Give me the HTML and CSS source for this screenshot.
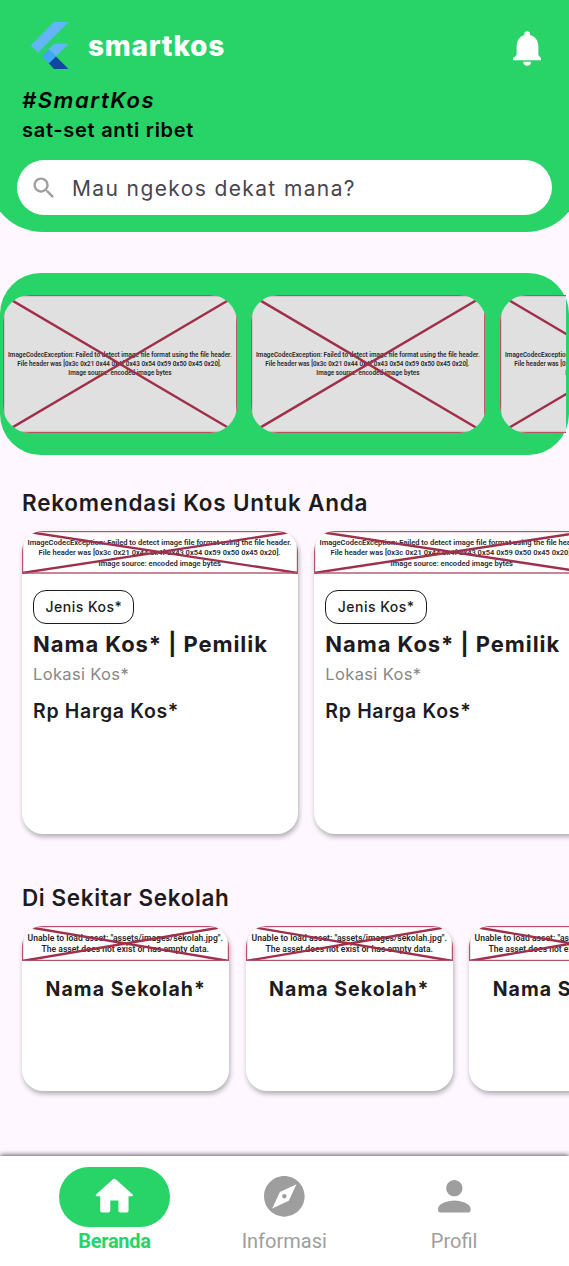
FILE: index.html
```html
<!DOCTYPE html>
<html lang="id">
<head>
<meta charset="utf-8">
<title>smartkos</title>
<link rel="stylesheet" href="styles.css">
</head>
<body>
<svg class="defs" aria-hidden="true">
  <symbol id="promo" viewBox="0 0 234 138" preserveAspectRatio="none">
    <rect width="234" height="138" fill="#e0e0e0"/>
    <g class="err">
      <text x="5" y="62.5" textLength="223.5" lengthAdjust="spacingAndGlyphs" font-size="6.8">ImageCodecException: Failed to detect image file format using the file header.</text>
      <text x="14.3" y="71" textLength="204" lengthAdjust="spacingAndGlyphs" font-size="6.8">File header was [0x3c 0x21 0x44 0x4f 0x43 0x54 0x59 0x50 0x45 0x20].</text>
      <text x="65.3" y="80.2" textLength="103" lengthAdjust="spacingAndGlyphs" font-size="6.8">Image source: encoded image bytes</text>
    </g>
    <path class="cross" d="M0 0 234 138M234 0 0 138"/>
    <rect class="frame" x=".5" y=".5" width="233" height="137"/>
  </symbol>
  <symbol id="kos" viewBox="0 0 276 43" preserveAspectRatio="none">
    <g class="err">
      <text x="5.5" y="13.5" textLength="264" lengthAdjust="spacingAndGlyphs" font-size="6.8">ImageCodecException: Failed to detect image file format using the file header.</text>
      <text x="16.6" y="23.5" textLength="242" lengthAdjust="spacingAndGlyphs" font-size="6.8">File header was [0x3c 0x21 0x44 0x4f 0x43 0x54 0x59 0x50 0x45 0x20].</text>
      <text x="76.5" y="34.5" textLength="122.5" lengthAdjust="spacingAndGlyphs" font-size="6.8">Image source: encoded image bytes</text>
    </g>
    <path class="cross" d="M0 0 276 42M276 0 0 42"/>
    <rect class="frame" x=".5" y=".5" width="275" height="41.5"/>
  </symbol>
  <symbol id="school" viewBox="0 0 207 35" preserveAspectRatio="none">
    <g class="err">
      <text x="5.5" y="14.5" textLength="195.5" lengthAdjust="spacingAndGlyphs" font-size="8.3">Unable to load asset: "assets/images/sekolah.jpg".</text>
      <text x="19.5" y="26.3" textLength="167.5" lengthAdjust="spacingAndGlyphs" font-size="8.3">The asset does not exist or has empty data.</text>
    </g>
    <path class="cross" d="M0 0 207 35M207 0 0 35"/>
    <rect class="frame" x=".5" y=".5" width="206" height="34"/>
  </symbol>
</svg>

<header class="header">
  <div class="topbar">
    <svg class="logo" viewBox="31 22 38 47">
      <path fill="#64b5f6" d="M53.8 22H68.5L38 52.7 30.7 45.5ZM53.8 43.7H68.5L56 56.5 48.7 49.3Z"/>
      <path fill="#42a5f5" d="M48.7 49.3 56 56.5 48.9 63.6 41.6 56.4Z"/>
      <path fill="#0d47a1" d="M56 56.5 68.5 69H54L48.9 63.6Z"/>
    </svg>
    <span class="brand">smartkos</span>
    <svg class="bell" viewBox="684 94 84 104" fill="#fff">
      <path d="M718 103a8.5 8.5 0 0 1 17 0v3c16 4 25 17 25 34v26l8 10v6h-84v-6l11-10v-26c0-17 9-30 23-34z"/>
      <path d="M715 186h23a11.5 12 0 0 1-23 0z"/>
    </svg>
  </div>
  <div class="tag">#SmartKos</div>
  <div class="slogan">sat-set anti ribet</div>
  <div class="search">
    <svg class="search-icon" viewBox="0 0 24 24" fill="#9e9e9e"><path d="M15.5 14h-.79l-.28-.27C15.41 12.59 16 11.11 16 9.5 16 5.91 13.09 3 9.5 3S3 5.91 3 9.5 5.91 16 9.5 16c1.61 0 3.09-.59 4.23-1.57l.27.28v.79l5 4.99L20.49 19l-4.99-5zm-6 0C7.01 14 5 11.99 5 9.5S7.01 5 9.5 5 14 7.01 14 9.5 11.99 14 9.5 14z"/></svg>
    <span class="hint">Mau ngekos dekat mana?</span>
  </div>
</header>

<section class="promos">
  <div class="promo-strip">
    <svg class="promo"><use href="#promo"/></svg>
    <svg class="promo"><use href="#promo"/></svg>
    <svg class="promo"><use href="#promo"/></svg>
  </div>
</section>

<h2 class="title title-kos">Rekomendasi Kos Untuk Anda</h2>
<section class="row">
  <article class="card kos">
    <svg class="kos-img"><use href="#kos"/></svg>
    <div class="kos-body">
      <div class="chip">Jenis Kos*</div>
      <div class="name">Nama Kos* | Pemilik</div>
      <div class="place">Lokasi Kos*</div>
      <div class="price">Rp Harga Kos*</div>
    </div>
  </article>
  <article class="card kos">
    <svg class="kos-img"><use href="#kos"/></svg>
    <div class="kos-body">
      <div class="chip">Jenis Kos*</div>
      <div class="name">Nama Kos* | Pemilik</div>
      <div class="place">Lokasi Kos*</div>
      <div class="price">Rp Harga Kos*</div>
    </div>
  </article>
</section>

<h2 class="title title-school">Di Sekitar Sekolah</h2>
<section class="row row-school">
  <article class="card school"><svg class="school-img"><use href="#school"/></svg><div class="school-name">Nama Sekolah*</div></article>
  <article class="card school"><svg class="school-img"><use href="#school"/></svg><div class="school-name">Nama Sekolah*</div></article>
  <article class="card school"><svg class="school-img"><use href="#school"/></svg><div class="school-name">Nama Sekolah*</div></article>
</section>

<nav class="nav">
  <div class="tab active">
    <div class="pill"><svg viewBox="0 0 24 24"><path d="M10 19v-5h4v5c0 .55.45 1 1 1h3c.55 0 1-.45 1-1v-7h1.7c.46 0 .68-.57.33-.87L12.67 3.6c-.38-.34-.96-.34-1.34 0l-8.36 7.53c-.34.3-.13.87.33.87H5v7c0 .55.45 1 1 1h3c.55 0 1-.45 1-1z"/></svg></div>
    <span>Beranda</span>
  </div>
  <div class="tab">
    <div class="pill"><svg viewBox="0 0 24 24"><path d="M12 10.9c-.61 0-1.1.49-1.1 1.1s.49 1.1 1.1 1.1c.61 0 1.1-.49 1.1-1.1s-.49-1.1-1.1-1.1zM12 2C6.48 2 2 6.48 2 12s4.48 10 10 10 10-4.48 10-10S17.52 2 12 2zm2.19 12.19L6 18l3.81-8.19L18 6l-3.81 8.19z"/></svg></div>
    <span>Informasi</span>
  </div>
  <div class="tab">
    <div class="pill"><svg viewBox="0 0 24 24"><path d="M12 12c2.21 0 4-1.79 4-4s-1.79-4-4-4-4 1.79-4 4 1.79 4 4 4zm0 2c-2.67 0-8 1.34-8 4v1c0 .55.45 1 1 1h14c.55 0 1-.45 1-1v-1c0-2.66-5.33-4-8-4z"/></svg></div>
    <span>Profil</span>
  </div>
</nav>
</body>
</html>
```
FILE: styles.css
```css
* { box-sizing: border-box; }
html, body { height: 1266px; }
body {
  margin: 0;
  display: flex;
  flex-direction: column;
  overflow: hidden;
  background: #fef7ff;
  color: #1d1b20;
  font-family: Inter, sans-serif;
  white-space: nowrap;
}
svg { display: block; flex: none; }
.defs { width: 0; height: 0; position: absolute; }
.err { font-family: Roboto, sans-serif; font-weight: 600; fill: #2a2a2a; }
.cross { stroke: #9f2f4a; stroke-width: 2.4; fill: none; }
.frame { stroke: #b5506a; stroke-width: 1.4; fill: none; }

.header {
  flex: none;
  height: 232px;
  margin: 0 -12px;
  padding: 22px 29px 0 28.5px;
  background: #28d468;
  border-radius: 0 0 55px 55px;
}
.topbar { display: flex; height: 47px; padding: 0 11px 0 14.5px; }
.logo { width: 38px; height: 47px; }
.brand { margin-left: 19px; font-size: 28px; font-weight: 800; line-height: 49px; letter-spacing: .75px; color: #fff; }
.bell { width: 28px; height: 34.7px; margin: 9px 0 0 auto; }
.tag { margin: 16px 0 0 5.5px; font-size: 22px; font-weight: 600; font-style: italic; line-height: 30px; letter-spacing: 1.55px; color: #000; }
.slogan { margin-left: 5.5px; font-size: 20px; font-weight: 600; line-height: 31px; letter-spacing: .72px; color: #000; }
.search { display: flex; align-items: center; height: 55px; margin-top: 14px; padding-left: 13.5px; background: #fff; border-radius: 28px; }
.search-icon { width: 28px; height: 28px; }
.hint { margin-left: 14px; padding-top: 2px; font-size: 21px; line-height: 53px; letter-spacing: 1.38px; color: #49454f; }

.promos { flex: none; height: 182px; margin-top: 41.3px; padding: 22px 3px; background: #28d468; border-radius: 41px; }
.promo-strip { display: flex; gap: 14px; overflow: hidden; }
.promo { width: 234.3px; height: 138px; border-radius: 27px; }

.title { flex: none; margin: 0; padding-left: 22px; font-size: 22.5px; font-weight: 600; line-height: 32px; }
.title-kos { margin-top: 32px; letter-spacing: .77px; }
.title-school { margin-top: 48px; letter-spacing: .6px; }
.row { flex: none; display: flex; gap: 16.3px; padding-left: 22px; margin-top: 12px; }
.row-school { gap: 16.6px; }
.card { flex: none; background: #fff; border-radius: 21px; box-shadow: 1px 3px 5px rgba(0,0,0,.3); }
.kos { width: 276px; height: 303px; }
.kos-img { width: 276px; height: 43px; border-radius: 21px 21px 0 0; }
.kos-body { display: flex; flex-direction: column; align-items: flex-start; padding: 16px 11px; }
.chip { height: 33.5px; padding: 0 11px 0 11.5px; border: 1.5px solid #1d1b20; border-radius: 13px; font-size: 14px; font-weight: 500; line-height: 32px; letter-spacing: .5px; }
.name { margin-top: 4px; font-size: 22px; font-weight: 700; line-height: 32px; letter-spacing: .93px; }
.place { font-size: 16.5px; line-height: 28px; letter-spacing: .35px; color: #888; }
.price { margin-top: 8px; font-size: 19.5px; font-weight: 600; line-height: 30px; letter-spacing: .68px; }
.school { width: 207px; height: 165px; }
.school-img { width: 207px; height: 35px; border-radius: 21px 21px 0 0; }
.school-name { padding: 13px 0 0 23.5px; font-size: 19.5px; font-weight: 700; line-height: 30px; letter-spacing: 1.05px; }

.nav {
  flex: none;
  display: flex;
  height: 110.5px;
  margin-top: auto;
  padding: 11.5px 30px 0 29.5px;
  background: #fff;
  box-shadow: 0 -1px 5px rgba(0,0,0,.65);
  font-family: Roboto, sans-serif;
  font-size: 20px;
  line-height: 28px;
  color: #9e9e9e;
}
.tab { flex: 1; display: flex; flex-direction: column; align-items: center; }
.pill { display: flex; align-items: center; justify-content: center; width: 111px; height: 59.5px; border-radius: 30px; }
.pill svg { width: 48.7px; height: 48.7px; fill: #9e9e9e; }
.active { color: #28d468; font-weight: 700; letter-spacing: -.3px; }
.active .pill { background: #28d468; }
.active .pill svg { fill: #fff; }
```
